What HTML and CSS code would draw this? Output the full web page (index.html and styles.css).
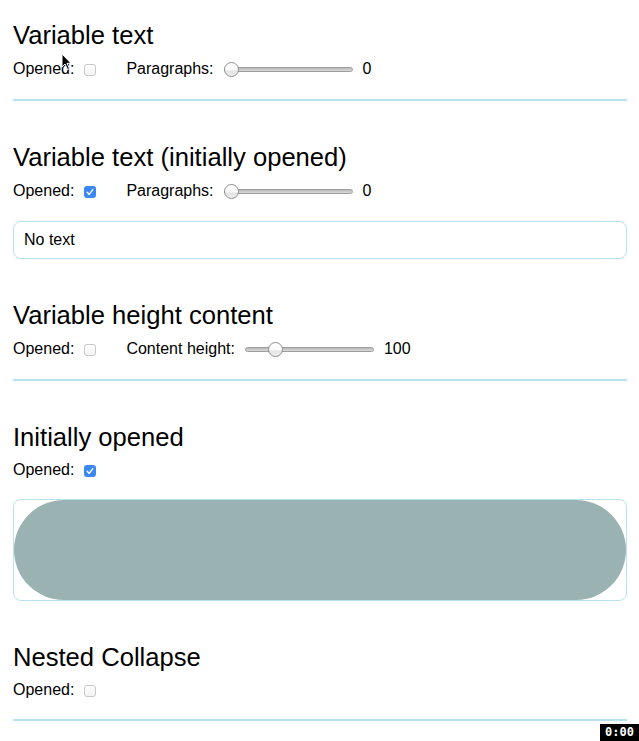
FILE: index.html
```html
<!DOCTYPE html>
<html>
<head>
<meta charset="utf-8">
<link rel="stylesheet" href="styles.css">
</head>
<body>
<div class="page">
  <section class="demo">
    <h2 class="title">Variable text</h2>
    <div class="controls">
      <label class="field">Opened: <span class="check"></span></label>
      <label class="field">Paragraphs: <span class="range"><span class="track"></span><span class="thumb thumb-start"></span></span> <span class="value">0</span></label>
    </div>
    <div class="collapse"></div>
  </section>

  <section class="demo">
    <h2 class="title">Variable text (initially opened)</h2>
    <div class="controls">
      <label class="field">Opened: <span class="check checked"><svg viewBox="0 0 12 12"><path d="M3.2 6.3 L5.2 8.4 L8.8 3.6" fill="none" stroke="#fff" stroke-width="1.4" stroke-linecap="round" stroke-linejoin="round"/></svg></span></label>
      <label class="field">Paragraphs: <span class="range"><span class="track"></span><span class="thumb thumb-start"></span></span> <span class="value">0</span></label>
    </div>
    <div class="collapse open">
      <p class="text">No text</p>
    </div>
  </section>

  <section class="demo">
    <h2 class="title">Variable height content</h2>
    <div class="controls">
      <label class="field">Opened: <span class="check"></span></label>
      <label class="field">Content height: <span class="range"><span class="track"></span><span class="thumb thumb-100"></span></span> <span class="value">100</span></label>
    </div>
    <div class="collapse"></div>
  </section>

  <section class="demo">
    <h2 class="title">Initially opened</h2>
    <div class="controls">
      <label class="field">Opened: <span class="check checked"><svg viewBox="0 0 12 12"><path d="M3.2 6.3 L5.2 8.4 L8.8 3.6" fill="none" stroke="#fff" stroke-width="1.4" stroke-linecap="round" stroke-linejoin="round"/></svg></span></label>
    </div>
    <div class="collapse open">
      <div class="pill"></div>
    </div>
  </section>

  <section class="demo">
    <h2 class="title">Nested Collapse</h2>
    <div class="controls">
      <label class="field">Opened: <span class="check"></span></label>
    </div>
    <div class="collapse"></div>
  </section>
</div>

<svg class="cursor" width="12" height="18" viewBox="0 0 12 18"><path d="M1 1 L1 14 L4 11 L6.5 16.5 L8.5 15.6 L6 10.3 L10 10.3 Z" fill="#000" stroke="#fff" stroke-width="1"/></svg>
<div class="timer">0:00</div>
</body>
</html>
```

FILE: styles.css
```css
html, body {
  margin: 0;
  padding: 0;
  background: #fff;
}

body {
  font-family: "Liberation Sans", Arial, sans-serif;
  color: #000;
  position: relative;
  width: 639px;
  height: 741px;
  overflow: hidden;
}

.page {
  padding: 20px 12px 0 13px;
}

.demo {
  margin-bottom: 41px;
}

.title {
  margin: 0;
  font-size: 25.6px;
  font-weight: normal;
  line-height: 30px;
}

.controls {
  display: flex;
  align-items: center;
  gap: 30px;
  margin-top: 9px;
  margin-bottom: 20px;
  font-size: 16px;
  line-height: 18px;
}

.field {
  display: flex;
  align-items: center;
  gap: 10px;
  white-space: nowrap;
}

.check {
  width: 12px;
  height: 12px;
  box-sizing: border-box;
  border: 1px solid #c9c9c9;
  border-radius: 3px;
  background: linear-gradient(#fff, #f2f2f2);
  display: inline-flex;
  align-items: center;
  justify-content: center;
  margin-top: 1px;
}

.check.checked {
  border: none;
  background: #3a87f7;
}

.check svg {
  width: 12px;
  height: 12px;
}

.range {
  position: relative;
  width: 129px;
  height: 20px;
  display: inline-block;
}

.track {
  position: absolute;
  left: 0;
  right: 0;
  top: 8px;
  height: 5px;
  box-sizing: border-box;
  border: 1px solid #9e9e9e;
  border-radius: 3px;
  background: linear-gradient(#b9b9b9, #d9d9d9);
}

.thumb {
  position: absolute;
  top: 3px;
  width: 15px;
  height: 15px;
  box-sizing: border-box;
  border-radius: 50%;
  border: 1px solid #8f8f8f;
  background: linear-gradient(#ffffff 0%, #fafafa 55%, #e4e4e4 60%, #eeeeee 100%);
}

.thumb-start { left: 0; }
.thumb-100 { left: 23px; }

.collapse {
  box-sizing: border-box;
  border: 1px solid #b8e3ee;
  border-width: 1px 0;
  overflow: hidden;
  height: 2px;
}

.collapse.open {
  height: auto;
  border-width: 1px;
  border-radius: 8px;
}

.text {
  margin: 0;
  padding: 9px 10px;
  font-size: 16px;
  line-height: 18px;
}

.pill {
  height: 100px;
  border-radius: 50px;
  background: #9bb2b2;
}

.cursor {
  position: absolute;
  left: 61px;
  top: 53px;
}

.timer {
  position: absolute;
  right: 0;
  bottom: 0;
  width: 39px;
  height: 17px;
  background: #000;
  color: #fff;
  font-family: "DejaVu Sans Mono", monospace;
  font-size: 12px;
  font-weight: bold;
  line-height: 17px;
  text-align: center;
}
```
